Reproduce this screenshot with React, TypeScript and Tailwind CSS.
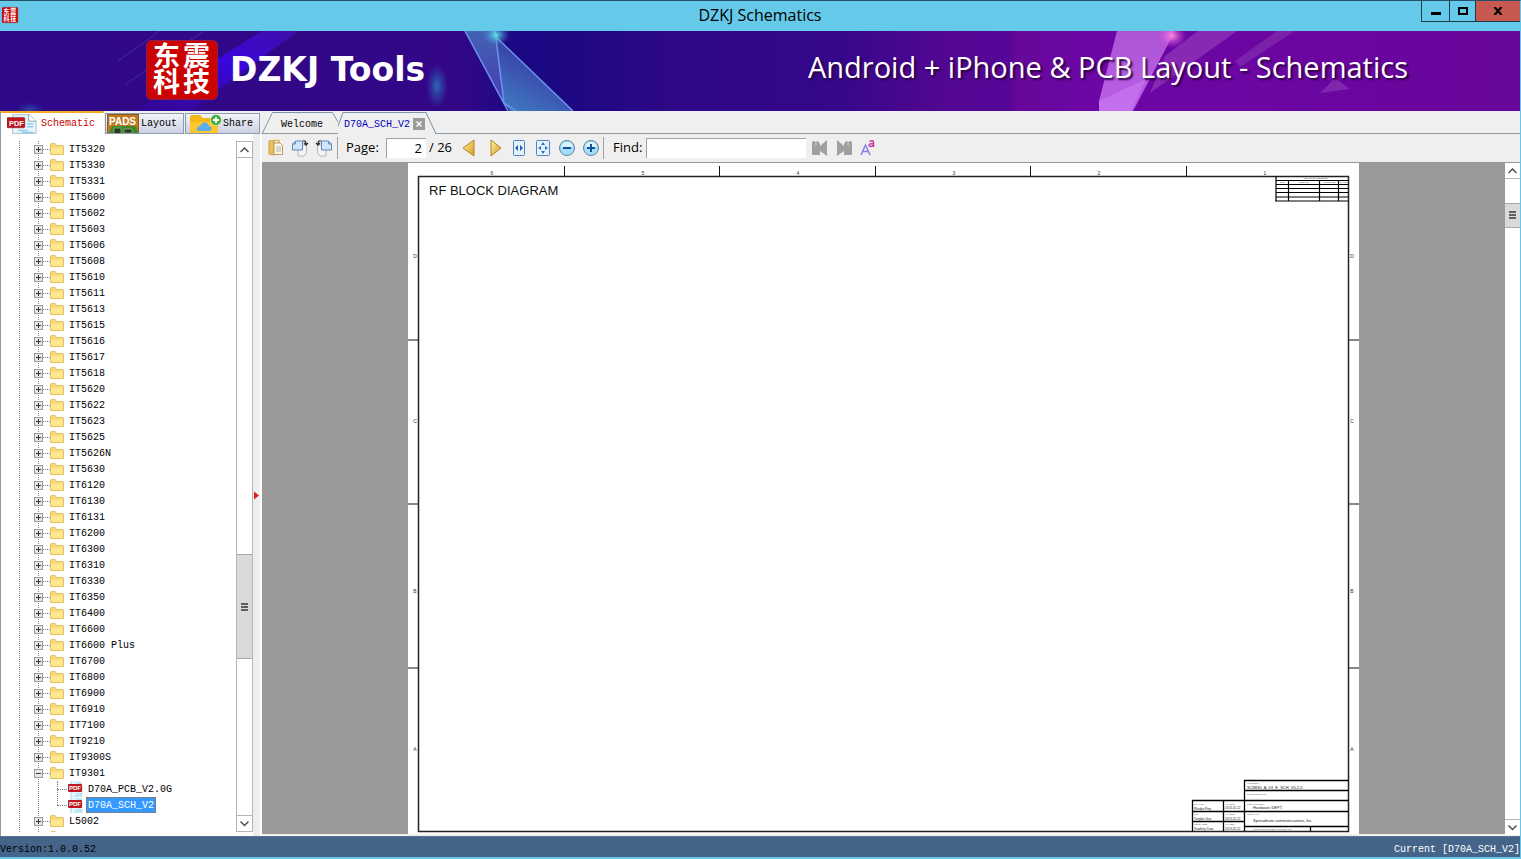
import React, { useState } from 'react';

type TreeNode = { name: string; children?: string[] };

const FOLDERS: TreeNode[] = [
  'IT5320', 'IT5330', 'IT5331', 'IT5600', 'IT5602', 'IT5603', 'IT5606', 'IT5608', 'IT5610',
  'IT5611', 'IT5613', 'IT5615', 'IT5616', 'IT5617', 'IT5618', 'IT5620', 'IT5622', 'IT5623',
  'IT5625', 'IT5626N', 'IT5630', 'IT6120', 'IT6130', 'IT6131', 'IT6200', 'IT6300', 'IT6310',
  'IT6330', 'IT6350', 'IT6400', 'IT6600', 'IT6600 Plus', 'IT6700', 'IT6800', 'IT6900', 'IT6910',
  'IT7100', 'IT9210', 'IT9300S', 'IT9301', 'L5002',
].map((name) => (name === 'IT9301' ? { name, children: ['D70A_PCB_V2.0G', 'D70A_SCH_V2'] } : { name }));

const TOP_MARKS = [['6', 84], ['5', 235], ['4', 390], ['3', 546], ['2', 691], ['1', 857]] as const;
const SIDE_MARKS = [['D', 95], ['C', 260], ['B', 430], ['A', 588]] as const;

function SealLogo({ className }: { className: string }) {
  return (
    <svg viewBox="0 0 72 60" preserveAspectRatio="none" overflow="visible" className={className} aria-hidden="true">
      <rect x="0.5" y="0.5" width="71" height="59" rx="5" fill="#cb0303" stroke="#8f1c50" />
      <g fill="#fff" fontFamily="'Noto Sans CJK SC', sans-serif" fontWeight="700" fontSize="27">
        <text x="7" y="26">东</text>
        <text x="37" y="26">震</text>
        <text x="7" y="52">科</text>
        <text x="37" y="52">技</text>
      </g>
    </svg>
  );
}

function BannerArt() {
  return (
    <svg viewBox="0 0 1520 80" preserveAspectRatio="none" className="absolute inset-0 h-full w-full" aria-hidden="true">
      <defs>
        <linearGradient id="base">
          <stop offset="0" stopColor="#2e0888" />
          <stop offset="0.3" stopColor="#330787" />
          <stop offset="0.345" stopColor="#190884" />
          <stop offset="0.38" stopColor="#1f0783" />
          <stop offset="0.44" stopColor="#2d0887" />
          <stop offset="0.55" stopColor="#35078a" />
          <stop offset="0.62" stopColor="#520792" />
          <stop offset="0.665" stopColor="#560799" />
          <stop offset="0.668" stopColor="#67079a" />
          <stop offset="0.72" stopColor="#6c06a5" />
          <stop offset="1" stopColor="#69069b" />
        </linearGradient>
        <linearGradient id="beam" x1="1" y1="0" x2="0" y2="1">
          <stop offset="0" stopColor="#4a12c8" stopOpacity="0.5" />
          <stop offset="0.4" stopColor="#3805dd" />
          <stop offset="1" stopColor="#3a08b8" stopOpacity="0.2" />
        </linearGradient>
        <linearGradient id="shardA" x1="0" y1="0" x2="0" y2="1">
          <stop offset="0" stopColor="#4262b2" />
          <stop offset="1" stopColor="#4a35b5" />
        </linearGradient>
        <linearGradient id="shardB" x1="0.7" y1="0" x2="0.1" y2="1">
          <stop offset="0" stopColor="#3a259d" />
          <stop offset="1" stopColor="#3e7fc2" />
        </linearGradient>
        <linearGradient id="pink" x1="0" y1="0" x2="0" y2="1">
          <stop offset="0" stopColor="#ae55d4" />
          <stop offset="1" stopColor="#b95fe9" />
        </linearGradient>
        <radialGradient id="teal">
          <stop offset="0" stopColor="#2b82bd" stopOpacity="0.8" />
          <stop offset="1" stopColor="#2b5fbd" stopOpacity="0" />
        </radialGradient>
        <radialGradient id="spark">
          <stop offset="0" stopColor="#62e6e6" />
          <stop offset="1" stopColor="#3a7fd0" stopOpacity="0" />
        </radialGradient>
        <radialGradient id="flare">
          <stop offset="0" stopColor="#ff85e0" />
          <stop offset="1" stopColor="#d050d8" stopOpacity="0" />
        </radialGradient>
      </defs>
      <rect width="1520" height="80" fill="url(#base)" />
      <path d="M262 0H298L190 80H134Z" fill="url(#beam)" />
      <path d="M204 0L126 53M160 0L118 30" stroke="#6a56cf" strokeOpacity="0.4" strokeWidth="1" />
      <ellipse cx="30" cy="79" rx="15" ry="8" fill="url(#teal)" fillOpacity="0.6" />
      <ellipse cx="437" cy="55" rx="11" ry="22" fill="url(#teal)" />
      <path d="M465 0H495L503 67L508 80Z" fill="url(#shardA)" />
      <path d="M495 5L573 80H510L504 72Z" fill="url(#shardB)" />
      <path d="M465 0L508 80M495 0L504 72L516 80M495 5L573 80" fill="none" stroke="#6d94eb" strokeWidth="1.5" />
      <ellipse cx="496" cy="4" rx="14" ry="11" fill="url(#spark)" />
      <path d="M1117 0H1175L1133 80H1099L1099 70Z" fill="url(#pink)" />
      <path d="M1099 70L1146 48L1131 80H1099Z" fill="#c777ee" fillOpacity="0.7" />
      <path d="M1198 0H1237L1150 62L1165 25Z" fill="#9236b8" fillOpacity="0.75" />
      <path d="M1277 0H1295L1240 36L1235 30Z" fill="#8632b0" fillOpacity="0.6" />
      <path d="M1335 47L1350 58L1320 62Z" fill="#8a35b2" fillOpacity="0.7" />
      <ellipse cx="1172" cy="5" rx="14" ry="12" fill="url(#flare)" />
    </svg>
  );
}

function PdfIcon({ className }: { className: string }) {
  return (
    <svg viewBox="0 0 32 20" className={className} aria-hidden="true">
      <path d="M6 0H24L31 7V20H6Z" fill="#eaf5fc" stroke="#a5bccb" />
      <path d="M23 0V7H31" fill="#fff" stroke="#88a0b3" />
      <path d="M12 17H22M21 10H28M21 13H28M16 19H28" stroke="#8ecbee" strokeWidth="1.5" />
      <rect y="3" width="19" height="11" rx="1" fill="#c0141f" stroke="#7b0c12" strokeWidth="0.5" />
      <text x="2" y="12" fontFamily="'Liberation Sans', sans-serif" fontWeight="700" fontSize="8" fill="#fff">PDF</text>
    </svg>
  );
}

function PadsIcon() {
  return (
    <svg viewBox="0 0 32 19" className="h-[19px] w-8" aria-hidden="true">
      <rect x="0.5" y="0.5" width="31" height="19" fill="#c27a20" stroke="#8b5c1e" />
      <path d="M2 19L5 12H29L31 19Z" fill="#3d8a2e" />
      <path d="M7 19V14H14V19M17 15H25V19H17Z" fill="#2c3528" stroke="#84b86b" strokeWidth="0.8" />
      <text x="2" y="11" fontFamily="'Liberation Sans', sans-serif" fontWeight="700" fontSize="10" fill="#fff">PADS</text>
    </svg>
  );
}

function ShareIcon() {
  return (
    <svg viewBox="0 0 32 19" className="h-[19px] w-8" aria-hidden="true">
      <path d="M0 3Q0 1 2 1H10L13 4H26Q28 4 28 6V19H0Z" fill="#f6b818" />
      <path d="M0 8H28V19H0Z" fill="#fdc62b" />
      <path d="M9 17Q6 17 7 14Q8 12 10 12Q12 7 17 9Q19 11 19 12Q23 13 21 16L20 17Z" fill="#5caee8" />
      <circle cx="26" cy="6" r="5.5" fill="#45ad45" stroke="#fff" strokeWidth="0.5" />
      <path d="M26 3V9M23 6H29" stroke="#fff" strokeWidth="1.8" />
    </svg>
  );
}

function FolderIcon() {
  return (
    <svg viewBox="0 0 14 12" className="h-3 w-[14px] shrink-0" aria-hidden="true">
      <path d="M0.5 11.5V1.5Q0.5 0.5 1.5 0.5H5L6.5 2.5H12.5Q13.5 2.5 13.5 3.5V11.5Z" fill="#f6d977" stroke="#e0c15a" />
      <path d="M1 5L13 4V11H1Z" fill="#fde88f" />
    </svg>
  );
}

function Expander({ open }: { open?: boolean }) {
  return (
    <svg viewBox="0 0 9 9" className="h-[9px] w-[9px] shrink-0" shapeRendering="crispEdges" aria-hidden="true">
      <rect x="0.5" y="0.5" width="8" height="8" fill="#e8e8e8" stroke="#999" />
      <path d={open ? 'M2 4.5H7' : 'M2 4.5H7M4.5 2V7'} stroke="#333" />
    </svg>
  );
}

function TreePanel({ selected, onSelect }: { selected: string; onSelect: (name: string) => void }) {
  return (
    <ul className="relative min-w-0 flex-1 overflow-hidden text-[10px] leading-4">
      <li className="absolute inset-y-0 left-[18px] border-l border-dotted border-[#808080]" aria-hidden="true" />
      <li className="absolute inset-y-0 left-[37px] border-l border-dotted border-[#808080]" aria-hidden="true" />
      {FOLDERS.map((node) => (
        <li key={node.name} className="relative">
          <button className="flex h-4 items-center pl-[33px]">
            <Expander open={!!node.children} />
            <span className="w-[7px] border-t border-dotted border-[#808080]" />
            <FolderIcon />
            <span className="pt-[2px] pl-[5px] whitespace-pre">{node.name}</span>
          </button>
          {node.children && (
            <ul className="relative">
              <li className="absolute top-0 left-14 h-6 border-l border-dotted border-[#808080]" aria-hidden="true" />
              {node.children.map((file) => (
                <li key={file}>
                  <button className="flex h-4 items-center pl-14" onClick={() => onSelect(file)}>
                    <span className="w-[10px] border-t border-dotted border-[#808080]" />
                    <svg viewBox="0 0 18 16" className="h-4 w-[18px]" aria-hidden="true">
                      <path d="M4 0H12L16 4V16H4Z" fill="#e3f5fa" />
                      <path d="M4 0V16M9 2H15M9 13H15M7 15H15" stroke="#9fd6e6" />
                      <rect x="1" y="3" width="14" height="8" rx="1" fill="#bd1722" />
                      <text x="2" y="9" fontFamily="'Liberation Sans', sans-serif" fontWeight="700" fontSize="6" fill="#fff">PDF</text>
                    </svg>
                    <span
                      className={
                        file === selected
                          ? 'ml-px h-4 border border-dotted border-[#b06a20] bg-[#3399ff] px-px leading-4 text-white'
                          : 'ml-px h-4 px-[2px] leading-[18px]'
                      }
                    >
                      {file}
                    </span>
                  </button>
                </li>
              ))}
            </ul>
          )}
        </li>
      ))}
      <li className="flex h-4 items-center pl-[49px]">
        <FolderIcon />
      </li>
    </ul>
  );
}

function Arrow({ down }: { down?: boolean }) {
  return (
    <svg viewBox="0 0 9 6" className="h-[6px] w-[9px]" aria-hidden="true">
      <path d={down ? 'M0.5 0.5L4.5 4.5L8.5 0.5' : 'M0.5 5L4.5 1L8.5 5'} fill="none" stroke="#505050" strokeWidth="1.5" />
    </svg>
  );
}

function Grip() {
  return (
    <span className="flex flex-col gap-px">
      <span className="h-[2px] w-[7px] bg-[#606060]" />
      <span className="h-[2px] w-[7px] bg-[#606060]" />
      <span className="h-[2px] w-[7px] bg-[#606060]" />
    </span>
  );
}

function TabShape({ d, width }: { d: string; width: number }) {
  return (
    <svg viewBox={`0 0 ${width} 21`} preserveAspectRatio="none" className="absolute inset-0 h-full w-full" aria-hidden="true">
      <path d={d} fill="#efefef" stroke="#8095a5" />
    </svg>
  );
}

function ToolButton({ label, children }: { label: string; children: React.ReactNode }) {
  return (
    <button aria-label={label} className="flex h-6 w-6 shrink-0 items-center justify-center">
      <svg viewBox="0 0 18 18" className="h-[18px] w-[18px]" fill="none" aria-hidden="true">
        {children}
      </svg>
    </button>
  );
}

function Toolbar() {
  const [page, setPage] = useState('2');
  const [query, setQuery] = useState('');

  return (
    <div className="flex h-7 shrink-0 items-center bg-[#efefef] pl-[2px] font-['Open_Sans',sans-serif] text-[13px]">
      <ToolButton label="Open">
        <path d="M2 2L7 1.5V16L2 15Z" fill="#edbf57" stroke="#d0a04a" />
        <path d="M7 1.5H12V4" stroke="#e0b860" strokeWidth="1.5" />
        <path d="M7 4H13L15.5 6.5V15.5H7Z" fill="#fff8e0" stroke="#b49b66" />
        <path d="M9 8H14M9 10H14M9 12H14" stroke="#a3b0c0" />
      </ToolButton>
      <ToolButton label="Rotate right">
        <path d="M9 6H15.5V14L13 17H7V11" fill="#f5f5f5" stroke="#b8b8b8" />
        <path d="M1.5 5L4.5 2H11.5V11H1.5Z" fill="#cfe6fc" stroke="#6287b8" />
        <path d="M1.5 5H4.5V2" stroke="#6287b8" />
        <path d="M12 2Q15 1 15 5M13 4L15 6L17 4" stroke="#333" strokeWidth="1.3" />
      </ToolButton>
      <ToolButton label="Rotate left">
        <path d="M11 11V17H5L2.5 14V6H9" fill="#f5f5f5" stroke="#b8b8b8" />
        <path d="M6.5 2H13.5L16.5 5V11H6.5Z" fill="#cfe6fc" stroke="#6287b8" />
        <path d="M13.5 2V5H16.5" stroke="#6287b8" />
        <path d="M6 2Q3 1 3 5M1 4L3 6L5 4" stroke="#333" strokeWidth="1.3" />
      </ToolButton>
      <span className="h-[22px] w-[2px] border-r border-[#a0a0a0]" />
      <label htmlFor="page" className="w-12 pl-2">Page:</label>
      <input
        id="page"
        value={page}
        onChange={(e) => setPage(e.target.value)}
        className="h-5 w-10 border-t border-l border-[#a0a0a0] bg-white pr-1 pb-[2px] text-right outline-none"
      />
      <span className="w-8 pl-[3px] whitespace-nowrap">/ 26</span>
      <ToolButton label="Previous page">
        <path d="M13 1V17L2 9Z" fill="url(#gold)" stroke="#b3851f" strokeLinejoin="round" />
        <defs>
          <linearGradient id="gold" x1="0" y1="0" x2="1" y2="1">
            <stop offset="0" stopColor="#fff0a0" />
            <stop offset="1" stopColor="#d39b22" />
          </linearGradient>
        </defs>
      </ToolButton>
      <span className="w-px" />
      <ToolButton label="Next page">
        <path d="M5 1V17L15 9Z" fill="url(#gold)" stroke="#b3851f" strokeLinejoin="round" />
      </ToolButton>
      <ToolButton label="Fit width">
        <rect x="3.5" y="1.5" width="11" height="15" rx="1" fill="#e2f2ff" stroke="#5582b8" />
        <path d="M8 6V12L5 9ZM10 6V12L13 9Z" fill="#1d5fae" />
      </ToolButton>
      <ToolButton label="Fit page">
        <rect x="2.5" y="1.5" width="13" height="15" rx="1" fill="#e2f2ff" stroke="#5582b8" />
        <path d="M9 3L11 6H7ZM9 15L11 12H7ZM4 9L7 7V11ZM14 9L11 7V11Z" fill="#2e6fb9" />
        <rect x="7" y="7" width="4" height="4" fill="#e2f2ff" />
      </ToolButton>
      <ToolButton label="Zoom out">
        <circle cx="9" cy="9" r="7.5" fill="#a5dcf8" stroke="#6384a4" />
        <path d="M3 8Q4 3 9 3T15 8" fill="#d8f2ff" />
        <path d="M5 9H13" stroke="#145398" strokeWidth="2" />
      </ToolButton>
      <ToolButton label="Zoom in">
        <circle cx="9" cy="9" r="7.5" fill="#a5dcf8" stroke="#6384a4" />
        <path d="M3 8Q4 3 9 3T15 8" fill="#d8f2ff" />
        <path d="M5 9H13M9 5V13" stroke="#145398" strokeWidth="2" />
      </ToolButton>
      <span className="h-[22px] w-px bg-[#a0a0a0]" />
      <label htmlFor="find" className="w-[42px] pl-[9px]">Find:</label>
      <input
        id="find"
        value={query}
        onChange={(e) => setQuery(e.target.value)}
        className="h-5 w-40 border-t border-l border-[#a0a0a0] bg-white px-1 outline-none"
      />
      <span className="w-[2px]" />
      <ToolButton label="Find previous">
        <path d="M1 3L3 2L5 3L7 2L9 5V7L16 1V17L9 12V16H1Z" fill="#a0a0a0" />
        <circle cx="5" cy="5" r="0.8" fill="#efefef" />
      </ToolButton>
      <ToolButton label="Find next">
        <path d="M17 3L15 2L13 3L11 2L9 5V7L2 1V17L9 12V16H17Z" fill="#a0a0a0" />
        <circle cx="13" cy="5" r="0.8" fill="#efefef" />
      </ToolButton>
      <ToolButton label="Match case">
        <path d="M2 16L6.5 6L11 16M3.5 12.5H9.5" stroke="#8a7be8" strokeWidth="1.5" />
        <path d="M10.5 2.5Q14.5 0.5 14.5 3.5V8M14.5 4.5Q10 4.5 10 6.5Q11 8.5 14.5 6.5" stroke="#c83aa0" strokeWidth="1.5" />
      </ToolButton>
    </div>
  );
}

function SchematicSheet() {
  return (
    <svg
      viewBox="0 0 951 671"
      preserveAspectRatio="xMidYMin meet"
      className="mx-auto h-full w-[951px] bg-white"
      fontFamily="'Liberation Sans', sans-serif"
    >
      <path
        d="M156.5 3V14M311.5 3V14M467.5 3V14M622.5 3V14M778.5 3V14M0 177H11M0 341H11M0 505H11M940 177H951M940 341H951M940 505H951"
        stroke="#111"
      />
      <rect x="10.5" y="13.5" width="930" height="655" fill="none" stroke="#222" strokeWidth="1.5" />
      <text x="21" y="32" fontSize="13" fill="#111">RF BLOCK DIAGRAM</text>
      {TOP_MARKS.map(([mark, x]) => (
        <text key={mark} x={x} y="11.5" fontSize="5" textAnchor="middle" fill="#333">{mark}</text>
      ))}
      {SIDE_MARKS.map(([mark, y]) => (
        <g key={mark} fontSize="5" textAnchor="middle" fill="#333">
          <text x="7" y={y}>{mark}</text>
          <text x="944" y={y}>{mark}</text>
        </g>
      ))}

      {/* Revision history */}
      <path
        d="M868 13V38M880.5 17V38M911.5 17V38M930.5 17V38M868 17.5H940M868 21.5H940M868 25.5H940M868 29.5H940M868 34H940M867 38H940"
        stroke="#000"
        strokeWidth="1.2"
      />
      <g fontSize="2.5" fill="#555">
        <text x="896" y="16.4">REVISION RECORD</text>
        <text x="872" y="20.4">LTR</text>
        <text x="891" y="20.4">ECO NO:</text>
        <text x="914" y="20.4">APPROVED:</text>
        <text x="932" y="20.4">DATE:</text>
      </g>

      {/* Title block */}
      <path
        d="M836.5 617V668M784.5 637V668M815.5 637V668M902.5 663V668M836 617.5H940M836 627.5H940M784 637.5H940M784 648.5H940M784 658.5H836M836 663.5H940"
        stroke="#000"
        strokeWidth="1.3"
      />
      <g fontSize="2.5" fill="#666">
        <text x="839" y="621">PROJECT:</text>
        <text x="839" y="631.5">DOCUMENT NO:</text>
        <text x="839" y="641.5">DEPARTMENT:</text>
        <text x="839" y="652">COMPANY:</text>
        <text x="845" y="667">PREVIOUS SCHEMATIC REV NO.</text>
        <text x="786" y="641.5">DRAWN:</text>
        <text x="818" y="641.5">DATED:</text>
        <text x="786" y="652">QC:</text>
        <text x="818" y="652">DATED:</text>
        <text x="786" y="662">RELEASED:</text>
        <text x="818" y="662">DATED:</text>
      </g>
      <g fontSize="4" fill="#222">
        <text x="839" y="625.5">SC8830_A_03_E_SCH_V0.2.0</text>
        <text x="845" y="646">Hardware DEPT.</text>
        <text x="845" y="658.5">Spreadtrum communications, Inc.</text>
      </g>
      <g fontSize="3" fill="#222">
        <text x="786" y="646.5">Windan Ping</text>
        <text x="786" y="657">Yongbin Guo</text>
        <text x="786" y="667">Xiaofeng Yuan</text>
        <text x="817" y="646">2013-02-22</text>
        <text x="817" y="657">2013-02-22</text>
        <text x="817" y="667">2013-02-22</text>
      </g>
    </svg>
  );
}

export default function App() {
  const [selected, setSelected] = useState('D70A_SCH_V2');

  return (
    <div className="flex h-screen flex-col overflow-hidden border-t border-r border-b-2 border-t-[#24506a] border-r-[#65c7e7] border-b-[#65c7e7] bg-[#efefef] font-['Liberation_Mono',monospace] text-[10px] text-black">
      {/* Title bar */}
      <header className="relative flex h-[30px] shrink-0 items-start justify-end bg-[#65c9e9]">
        <SealLogo className="absolute top-[6px] left-[2px] h-4 w-4" />
        <h1 className="absolute inset-x-0 text-center font-['Open_Sans',sans-serif] text-[16px] leading-[28px]">DZKJ Schematics</h1>
        <div className="relative flex h-[21px] border-b border-l border-[#1d3a48]">
          <button aria-label="Minimize" className="flex w-[27px] items-center justify-center pt-1">
            <span className="h-[3px] w-[10px] bg-black" />
          </button>
          <button aria-label="Maximize" className="flex w-[26px] items-center justify-center border-l border-[#1d3a48]">
            <span className="h-2 w-[10px] border-2 border-black" />
          </button>
          <button aria-label="Close" className="flex w-[45px] items-center justify-center border-l border-[#1d3a48] bg-[#c75950]">
            <svg viewBox="0 0 10 8" className="h-2 w-[10px]" aria-hidden="true">
              <path d="M1.5 0L8.5 8M8.5 0L1.5 8" stroke="#000" strokeWidth="2.2" />
            </svg>
          </button>
        </div>
      </header>

      {/* Banner */}
      <div className="relative h-20 shrink-0 overflow-hidden">
        <BannerArt />
        <div className="relative flex h-full items-center justify-between pr-28 pb-[2px] pl-[146px] whitespace-nowrap text-white">
          <div className="flex items-center gap-3">
            <SealLogo className="h-[60px] w-[72px]" />
            <span className="font-['DejaVu_Sans',sans-serif] text-[33px] leading-10 font-bold">DZKJ Tools</span>
          </div>
          <span className="pb-[6px] font-['Open_Sans',sans-serif] text-[29px] leading-10 [text-shadow:2px_2px_2px_#2a0040]">
            Android + iPhone &amp; PCB Layout - Schematics
          </span>
        </div>
      </div>

      <div className="flex min-h-0 flex-1">
        {/* Sidebar */}
        <aside className="flex w-[262px] shrink-0 flex-col border-l border-[#8d9ba6]">
          <div className="flex h-[23px] gap-px">
            <button className="flex w-[103px] items-center gap-1 border-t-2 border-[#f5a623] bg-white pl-[6px] text-[#c80000]">
              <PdfIcon className="h-5 w-[30px]" />
              Schematic
            </button>
            <button className="mt-[2px] flex w-[79px] items-center gap-[2px] border border-[#8d9bb5] bg-linear-to-b from-[#f3f4f8] to-[#cdd2e2] pl-px">
              <PadsIcon />
              Layout
            </button>
            <button className="mt-[2px] flex w-[75px] items-center gap-px border border-[#8d9bb5] bg-linear-to-b from-[#f3f4f8] to-[#cdd2e2] pl-1">
              <ShareIcon />
              Share
            </button>
          </div>
          <div className="flex min-h-0 flex-1 bg-white">
            <div className="flex min-w-0 flex-1 pt-[7px] pb-1">
              <TreePanel selected={selected} onSelect={setSelected} />
              <div className="flex w-[17px] flex-col border border-[#b5b5b5]">
                <button aria-label="Scroll up" className="flex h-4 items-center justify-center border-b border-[#b5b5b5]">
                  <Arrow />
                </button>
                <div className="grow-[396]" />
                <div className="flex h-[105px] items-center justify-center border-y border-[#a8a8a8] bg-[#dadada]">
                  <Grip />
                </div>
                <div className="grow-[156]" />
                <button aria-label="Scroll down" className="flex h-4 items-center justify-center border-t border-[#b5b5b5]">
                  <Arrow down />
                </button>
              </div>
            </div>
            <button aria-label="Collapse panel" className="mr-[2px] flex w-[7px] items-center bg-[#ebefef] pt-5 pl-px">
              <svg viewBox="0 0 5 9" className="h-[9px] w-[5px]" aria-hidden="true">
                <path d="M0 0.5L5 4.5L0 8.5Z" fill="#e0201c" />
              </svg>
            </button>
          </div>
        </aside>

        {/* Documents */}
        <main className="flex min-w-0 flex-1 flex-col">
          <div className="flex h-[23px] shrink-0 items-end border-b border-[#8d9ba6]">
            <button className="relative h-[21px] w-[76px] pt-[3px] pl-1">
              <TabShape width={76} d="M0.5 21L10.5 0.5H70.5L76 10" />
              <span className="relative">Welcome</span>
            </button>
            <div className="relative -mb-px flex h-[22px] w-[100px] items-center pt-[2px] pl-[6px] text-[#0000c0]">
              <TabShape width={100} d="M-3 21L5 0.5H88L98 21" />
              <button className="relative">D70A_SCH_V2</button>
              <button aria-label="Close tab" className="relative ml-[3px] flex h-3 w-3 items-center justify-center bg-[#9b9b9b]">
                <svg viewBox="0 0 6 6" className="h-[6px] w-[6px]" aria-hidden="true">
                  <path d="M0.5 0.5L5.5 5.5M5.5 0.5L0.5 5.5" stroke="#fff" strokeWidth="1.4" />
                </svg>
              </button>
            </div>
          </div>
          <Toolbar />
          <div className="flex min-h-0 flex-1 border-t border-[#999]">
            <div className="mb-[2px] min-w-0 flex-1 overflow-hidden bg-[#999]">
              <SchematicSheet />
            </div>
            <div className="mb-px flex w-[15px] flex-col bg-white">
              <button aria-label="Scroll up" className="flex h-4 items-center justify-center border-b border-[#b5b5b5]">
                <Arrow />
              </button>
              <div className="grow-[24]" />
              <div className="flex h-[25px] items-center justify-center border-y border-[#a8a8a8] bg-[#dadada]">
                <Grip />
              </div>
              <div className="grow-[592]" />
              <button aria-label="Scroll down" className="flex h-4 items-center justify-center border-t border-[#b5b5b5]">
                <Arrow down />
              </button>
            </div>
          </div>
        </main>
      </div>

      <footer className="flex h-[21px] shrink-0 items-center justify-between border-t border-[#56738f] bg-[#446589] pt-1">
        <span>Version:1.0.0.52</span>
        <span className="text-white">Current [D70A_SCH_V2]</span>
      </footer>
    </div>
  );
}
